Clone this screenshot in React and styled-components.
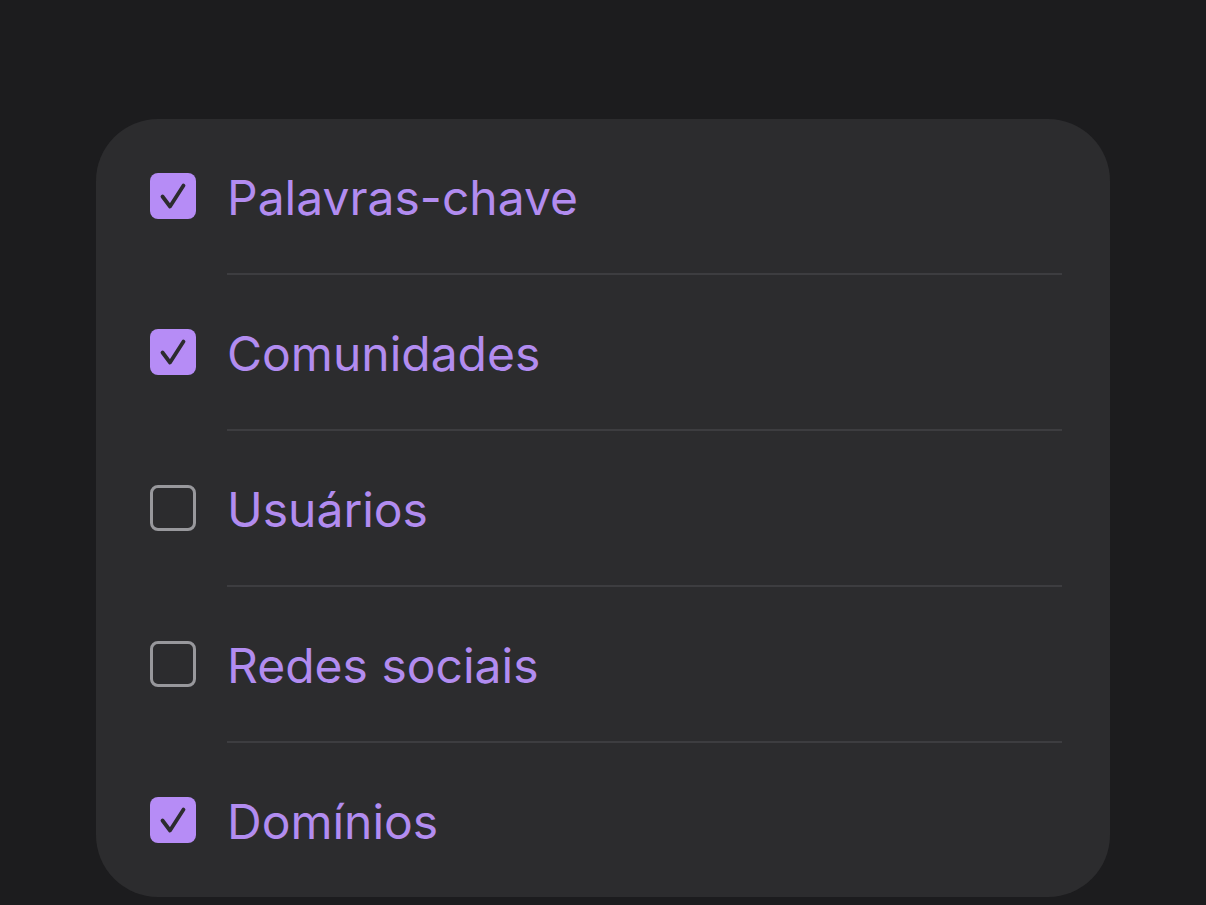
import React, { useState } from "react";
import styled, { createGlobalStyle } from "styled-components";

const items = [
  { label: "Palavras-chave", checked: true },
  { label: "Comunidades", checked: true },
  { label: "Usuários", checked: false },
  { label: "Redes sociais", checked: false },
  { label: "Domínios", checked: true },
];

export default function App() {
  const [list, setList] = useState(items);
  const toggle = (i) =>
    setList(list.map((it, n) => (n === i ? { ...it, checked: !it.checked } : it)));

  return (
    <>
      <Global />
      <Page>
        <Card>
          {list.map((it, i) => (
            <Row key={it.label} onClick={() => toggle(i)} last={i === list.length - 1}>
              <Box checked={it.checked}>
                {it.checked && (
                  <svg width="46" height="46" viewBox="0 0 46 46" fill="none">
                    <path
                      d="M12.5 23.5l7.5 10L33.5 12.5"
                      stroke="#2c2c2e"
                      strokeWidth="3.8"
                      strokeLinecap="round"
                      strokeLinejoin="round"
                    />
                  </svg>
                )}
              </Box>
              <Label>{it.label}</Label>
            </Row>
          ))}
        </Card>
      </Page>
    </>
  );
}

const Global = createGlobalStyle`
  html, body {
    margin: 0;
    background: #1c1c1e;
  }
  body {
    font-family: Inter, "Noto Sans", sans-serif;
  }
`;

const Page = styled.div`
  padding: 119px 96px 0;
  height: 905px;
  box-sizing: border-box;
`;

const Card = styled.div`
  width: 1014px;
  background: #2c2c2e;
  border-radius: 62px;
  padding-left: 54px;
  box-sizing: border-box;
`;

const Row = styled.div`
  display: flex;
  align-items: center;
  gap: 31px;
  height: 154px;
  cursor: pointer;
  position: relative;
  margin-bottom: ${(p) => (p.last ? "0" : "2px")};
  &::after {
    content: "";
    display: ${(p) => (p.last ? "none" : "block")};
    position: absolute;
    left: 77px;
    right: 48px;
    bottom: -2px;
    height: 2px;
    background: #3d3d40;
  }
`;

const Box = styled.div`
  width: 46px;
  height: 46px;
  box-sizing: border-box;
  border-radius: 8px;
  flex-shrink: 0;
  display: flex;
  align-items: center;
  justify-content: center;
  background: ${(p) => (p.checked ? "#b68cf6" : "transparent")};
  border: ${(p) => (p.checked ? "none" : "3px solid #98989c")};
`;

const Label = styled.span`
  font-size: 48px;
  color: #b28cf0;
  line-height: 1;
  padding-top: 4px;
`;
